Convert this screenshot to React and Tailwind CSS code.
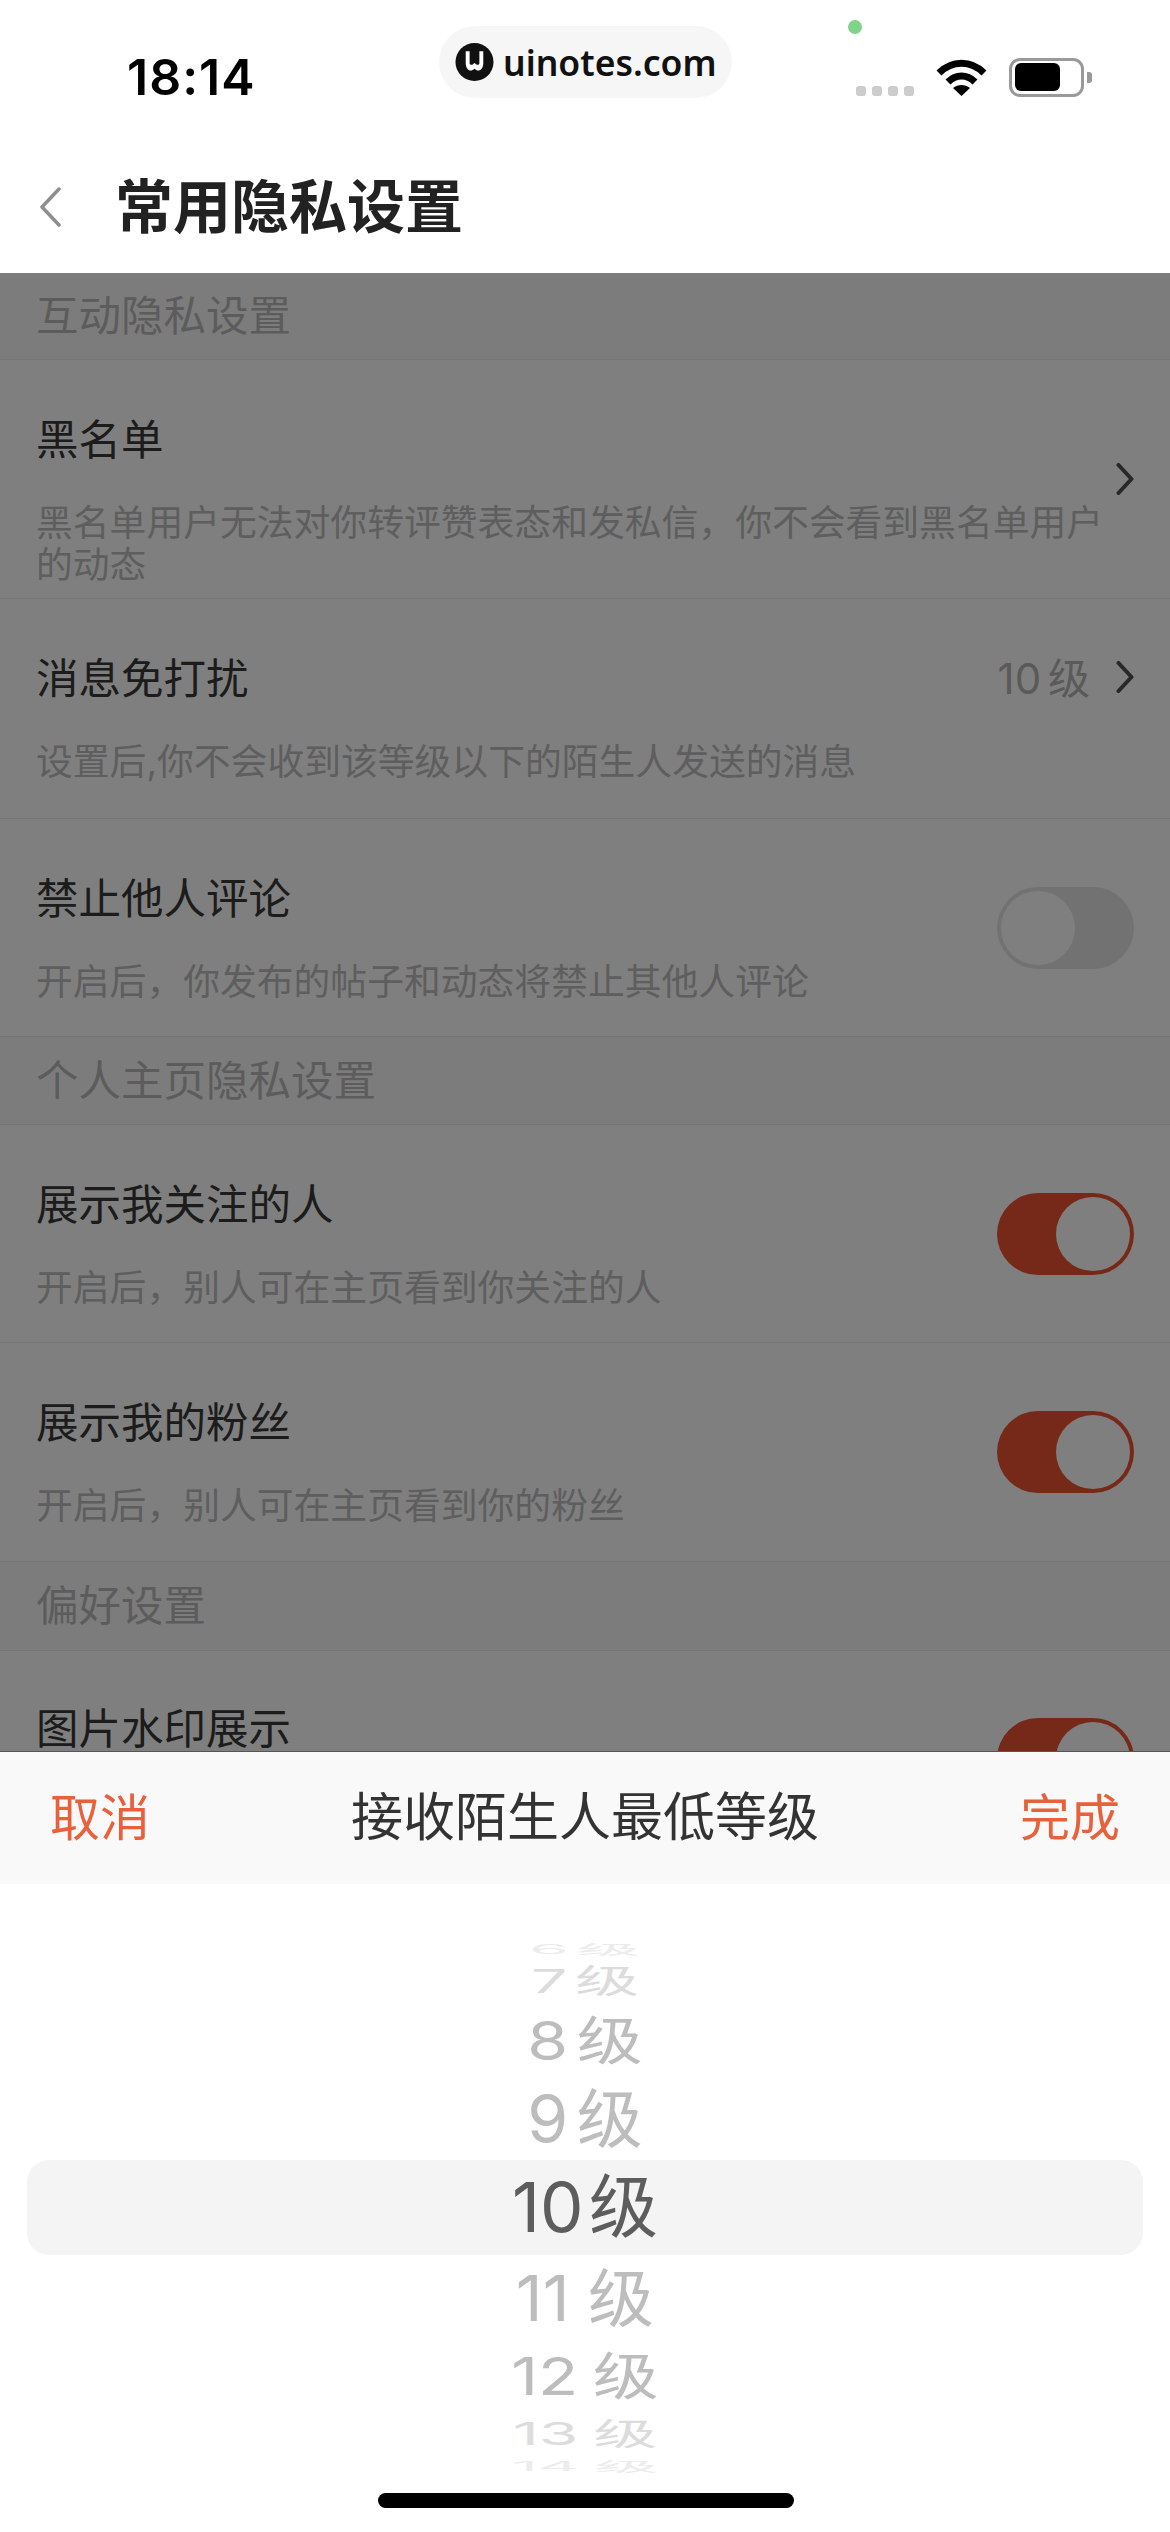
import React from "react";

const Chevron = ({ className = "" }) => (
  <svg viewBox="0 0 18 32" className={`w-[18px] h-[32px] ${className}`} fill="none">
    <path d="M2.5 2 L15.5 16 L2.5 30" stroke="#505050" strokeWidth="4" strokeLinecap="round" strokeLinejoin="round" />
  </svg>
);

const Toggle = ({ on, className = "" }) => (
  <div className={`w-[137px] h-[82px] rounded-full flex items-center shrink-0 p-[4px] ${on ? "bg-[#ee5233] justify-end" : "bg-[#e4e4e4] justify-start"} ${className}`}>
    <div className="w-[74px] h-[74px] rounded-full bg-white" />
  </div>
);

const SectionTitle = ({ children, className = "" }) => (
  <div className={`flex items-center pl-[36px] bg-[#f8f8f8] border-b border-[#ebebeb] text-[42.5px] text-[#b9b9b9] ${className}`}>
    {children}
  </div>
);

const Row = ({ title, sub, right, className = "" }) => (
  <div className={`flex items-start justify-between pl-[36px] pr-[36px] pt-[55px] bg-white border-b border-[#ebebeb] ${className}`}>
    <div className="w-[1075px]">
      <div className="text-[42.5px] leading-[50px] text-[#383838]">{title}</div>
      <div className="mt-[37px] text-[36.8px] leading-[42px] text-[#bdbdbd]">{sub}</div>
    </div>
    <div className="self-center -mt-[55px]">{right}</div>
  </div>
);

const wheel = [
  { label: "6 级", row: "h-[18px]", text: "text-[64px] text-[#ececec] scale-y-[0.2] [word-spacing:-10px]" },
  { label: "7 级", row: "h-[46px]", text: "text-[64px] text-[#dcdcdc] scale-y-[0.52] [word-spacing:-10px]" },
  { label: "8 级", row: "h-[74px]", text: "text-[66px] text-[#bdbdbd] scale-y-[0.8] [word-spacing:-10px]" },
  { label: "9 级", row: "h-[82px]", text: "text-[66px] text-[#bdbdbd] scale-y-[0.97] [word-spacing:-10px]" },
  { label: "10 级", row: "h-[95px] w-[1116px] rounded-[22px] bg-[#f4f4f4]", text: "text-[69px] text-[#5d5d5d] [word-spacing:-14px]" },
  { label: "11 级", row: "h-[86px]", text: "text-[66px] text-[#bdbdbd] scale-y-[0.95]" },
  { label: "12 级", row: "h-[70px]", text: "text-[66px] text-[#bdbdbd] scale-y-[0.78] [word-spacing:-4px]" },
  { label: "13 级", row: "h-[46px]", text: "text-[64px] text-[#dcdcdc] scale-y-[0.48] [word-spacing:-3px]" },
  { label: "14 级", row: "h-[18px]", text: "text-[64px] text-[#ececec] scale-y-[0.2] [word-spacing:-3px]" },
];

export default function App() {
  return (
    <div className="relative w-[1170px] h-[2532px] bg-white overflow-hidden font-['Inter','Noto_Sans_CJK_SC',sans-serif]">
      {/* Status bar */}
      <div className="relative flex h-[140px]">
        <div className="ml-[127px] mt-[47px] w-[130px] text-[50px] leading-[60px] font-semibold tracking-[1px] text-black">18:14</div>
        <div className="ml-[182px] mt-[26px] w-[293px] h-[72px] rounded-[36px] bg-[#f6f6f6] flex items-center pl-[16px] gap-[9px]">
          <svg viewBox="0 0 40 40" className="w-[39px] h-[40px]">
            <circle cx="20" cy="20" r="19.5" fill="#111" />
            <path d="M11 9 V21 C11 28 16 31 20 27 C24 31 29 28 29 21 V9 H25 V21 C25 23 23 24 20 21 C17 24 15 23 15 21 V9 Z" fill="#fff" />
          </svg>
          <span className="font-['Noto_Sans',sans-serif] text-[35.5px] leading-[44px] font-semibold text-[#111]">uinotes.com</span>
        </div>
        <div className="absolute left-[848px] top-[20px] w-[14px] h-[14px] rounded-full bg-[#7fd48a]" />
        <div className="ml-[124px] mt-[86px] flex gap-[6px] h-[10px]">
          <span className="w-[10px] h-[10px] rounded-[3px] bg-[#cccccc]" />
          <span className="w-[10px] h-[10px] rounded-[3px] bg-[#cccccc]" />
          <span className="w-[10px] h-[10px] rounded-[3px] bg-[#cccccc]" />
          <span className="w-[10px] h-[10px] rounded-[3px] bg-[#cccccc]" />
        </div>
        <svg viewBox="0 0 51 37" className="ml-[22px] mt-[59px] w-[51px] h-[37px]" fill="none">
          <path d="M3 14 C16 1 35 1 48 14" stroke="#000" strokeWidth="7" />
          <path d="M12 23 C20 15 31 15 39 23" stroke="#000" strokeWidth="7" />
          <path d="M17 29 C22 25 29 25 34 29 L25.5 37 Z" fill="#000" />
        </svg>
        <div className="ml-[22px] mt-[58px] w-[75px] h-[39px] rounded-[11px] border-[3px] border-[#999999] pl-[3px] pt-[2px]">
          <div className="w-[45px] h-[28px] rounded-[6px] bg-black" />
        </div>
        <div className="ml-[3px] mt-[72px] w-[5px] h-[11px] rounded-r-[3px] bg-[#999999]" />
      </div>

      {/* Nav */}
      <div className="flex items-center h-[133px]">
        <svg viewBox="0 0 22 40" className="ml-[39px] w-[22px] h-[40px]" fill="none">
          <path d="M20 2 L3 20 L20 38" stroke="#8e8e8e" strokeWidth="3.5" strokeLinecap="round" strokeLinejoin="round" />
        </svg>
        <div className="ml-[54px] text-[58px] leading-[70px] font-semibold text-[#222222]">常用隐私设置</div>
      </div>

      {/* Dimmed settings list */}
      <div className="relative h-[1478px] overflow-hidden bg-white">
        <SectionTitle className="h-[87px]">互动隐私设置</SectionTitle>
        <Row
          className="h-[239px]"
          title="黑名单"
          sub="黑名单用户无法对你转评赞表态和发私信，你不会看到黑名单用户的动态"
          right={<Chevron />}
        />
        <div className="pt-[55px] h-[220px] pl-[36px] pr-[36px] bg-white border-b border-[#ebebeb]">
          <div className="flex items-center justify-between">
            <div className="text-[42.5px] leading-[50px] text-[#383838]">消息免打扰</div>
            <div className="flex items-center gap-[26px]">
              <span className="text-[42px] leading-[50px] text-[#b4b4b4] [word-spacing:-5px]">10 级</span>
              <Chevron className="-mt-[5px]" />
            </div>
          </div>
          <div className="mt-[37px] text-[36.8px] leading-[42px] text-[#bdbdbd]">设置后,你不会收到该等级以下的陌生人发送的消息</div>
        </div>
        <Row className="h-[218px]" title="禁止他人评论" sub="开启后，你发布的帖子和动态将禁止其他人评论" right={<Toggle />} />
        <SectionTitle className="h-[88px]">个人主页隐私设置</SectionTitle>
        <Row className="h-[218px]" title="展示我关注的人" sub="开启后，别人可在主页看到你关注的人" right={<Toggle on />} />
        <Row className="h-[219px]" title="展示我的粉丝" sub="开启后，别人可在主页看到你的粉丝" right={<Toggle on />} />
        <SectionTitle className="h-[89px]">偏好设置</SectionTitle>
        <div className="flex items-start justify-between pl-[36px] pr-[36px] pt-[53px]">
          <div className="text-[42.5px] leading-[50px] text-[#383838]">图片水印展示</div>
          <Toggle on className="mt-[14px]" />
        </div>
        <div className="absolute inset-0 bg-black/50" />
      </div>

      {/* Bottom sheet */}
      <div className="border-t border-[#555555] bg-white">
        <div className="flex items-center justify-between h-[132px] px-[50px] bg-[#f9f9f9]">
          <span className="text-[50px] leading-[60px] text-[#e8603c]">取消</span>
          <span className="text-[52px] leading-[60px] text-[#333333]">接收陌生人最低等级</span>
          <span className="text-[50px] leading-[60px] text-[#e8603c]">完成</span>
        </div>
        <div className="flex flex-col items-center pt-[56px]">
          {wheel.map((item) => (
            <div key={item.label} className={`flex items-center justify-center ${item.row}`}>
              <span className={`block leading-none whitespace-nowrap ${item.text}`}>{item.label}</span>
            </div>
          ))}
        </div>
      </div>

      {/* Home indicator */}
      <div className="absolute left-[378px] bottom-[24px] w-[416px] h-[15px] rounded-full bg-black" />
    </div>
  );
}
